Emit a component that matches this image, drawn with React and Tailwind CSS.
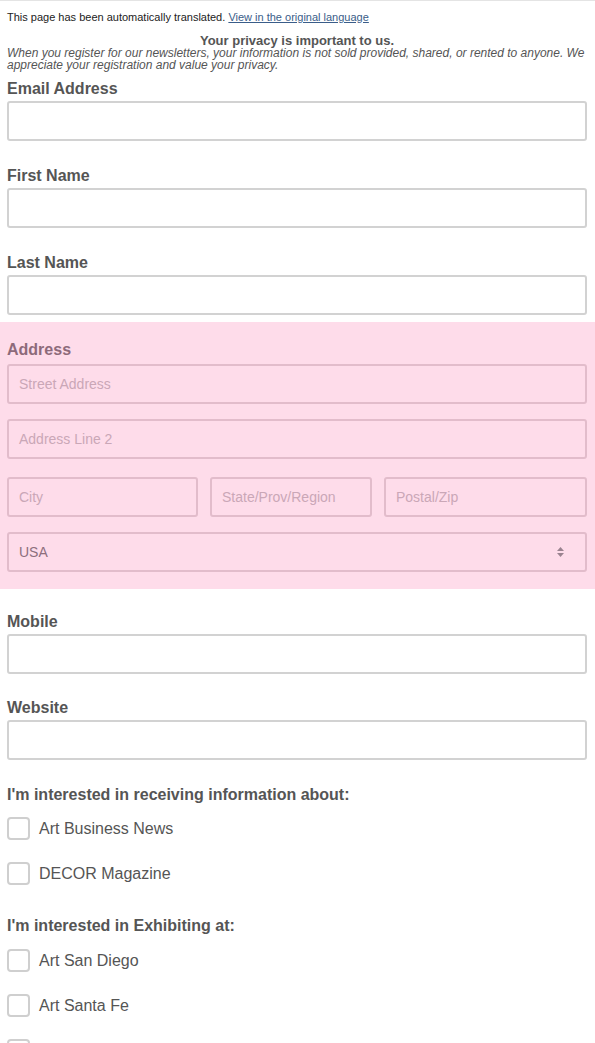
const font = { fontFamily: '"Liberation Sans", Arial, sans-serif' };

function Field({ label, mt = 'mt-[26px]' }) {
  return (
    <div className={mt}>
      <div className="text-[16px] leading-[18px] font-bold text-[#555555]">{label}</div>
      <input className="mt-[3px] block w-full h-10 border-2 border-[#d2d2d2] rounded-[3px] bg-white px-3 outline-none" />
    </div>
  );
}

function PinkInput({ placeholder, className = '' }) {
  return (
    <div className={`h-10 border-2 border-[#e2bccb] rounded-[3px] px-[10px] flex items-center text-[14px] text-[#caa7b7] ${className}`}>
      {placeholder}
    </div>
  );
}

function Check({ label, mt }) {
  return (
    <div className={`flex items-center gap-[9px] ${mt}`}>
      <span className="w-[23px] h-[23px] border-2 border-[#cfcfcf] rounded-[4px] bg-white shrink-0" />
      <span className="text-[16px] leading-[18px] text-[#555555]">{label}</span>
    </div>
  );
}

export default function App() {
  return (
    <div className="w-[595px] h-[1043px] overflow-hidden bg-white border-t border-[#e4e4e4]" style={font}>
      <div className="px-[7px] pr-[8px]">
        <div className="pt-[10px] text-[11px] leading-[13px] text-[#222]">
          This page has been automatically translated.{' '}
          <a href="#" className="text-[#3a5d89] underline">View in the original language</a>
        </div>
        <div className="mt-[10px] text-center text-[13px] leading-[13px] font-bold text-[#555555]">
          Your privacy is important to us.
        </div>
        <p className="text-[12px] leading-[12px] italic text-[#555555]">
          When you register for our newsletters, your information is not sold provided, shared, or rented to anyone. We appreciate your registration and value your privacy.
        </p>
        <Field label="Email Address" mt="mt-[9px]" />
        <Field label="First Name" />
        <Field label="Last Name" />
      </div>

      <div className="mt-[7px] bg-[#fedcea] px-[7px] pr-[8px] pt-[19px] pb-[17px]">
        <div className="text-[16px] leading-[18px] font-bold text-[#8d6a7a]">Address</div>
        <PinkInput placeholder="Street Address" className="mt-[5px]" />
        <PinkInput placeholder="Address Line 2" className="mt-[15px]" />
        <div className="mt-[18px] flex gap-[12px]">
          <PinkInput placeholder="City" className="w-[191px]" />
          <PinkInput placeholder="State/Prov/Region" className="w-[162px]" />
          <PinkInput placeholder="Postal/Zip" className="flex-1" />
        </div>
        <div className="mt-[15px] h-10 border-2 border-[#e2bccb] rounded-[3px] px-[10px] flex items-center justify-between text-[14px] text-[#8d6f7d]">
          <span>USA</span>
          <svg width="9" height="12" viewBox="0 0 9 12" className="mr-[10px]">
            <path d="M4.5 1 L8 5 H1 Z" fill="#9a8390" />
            <path d="M4.5 11 L8 7 H1 Z" fill="#9a8390" />
          </svg>
        </div>
      </div>

      <div className="px-[7px] pr-[8px]">
        <Field label="Mobile" mt="mt-[24px]" />
        <Field label="Website" mt="mt-[25px]" />
        <div className="mt-[26px] text-[16px] leading-[18px] font-bold text-[#555555]">
          I'm interested in receiving information about:
        </div>
        <Check label="Art Business News" mt="mt-[13px]" />
        <Check label="DECOR Magazine" mt="mt-[22px]" />
        <div className="mt-[32px] text-[16px] leading-[18px] font-bold text-[#555555]">
          I'm interested in Exhibiting at:
        </div>
        <Check label="Art San Diego" mt="mt-[14px]" />
        <Check label="Art Santa Fe" mt="mt-[22px]" />
        <Check label="Art Market Hamptons" mt="mt-[22px]" />
      </div>
    </div>
  );
}
